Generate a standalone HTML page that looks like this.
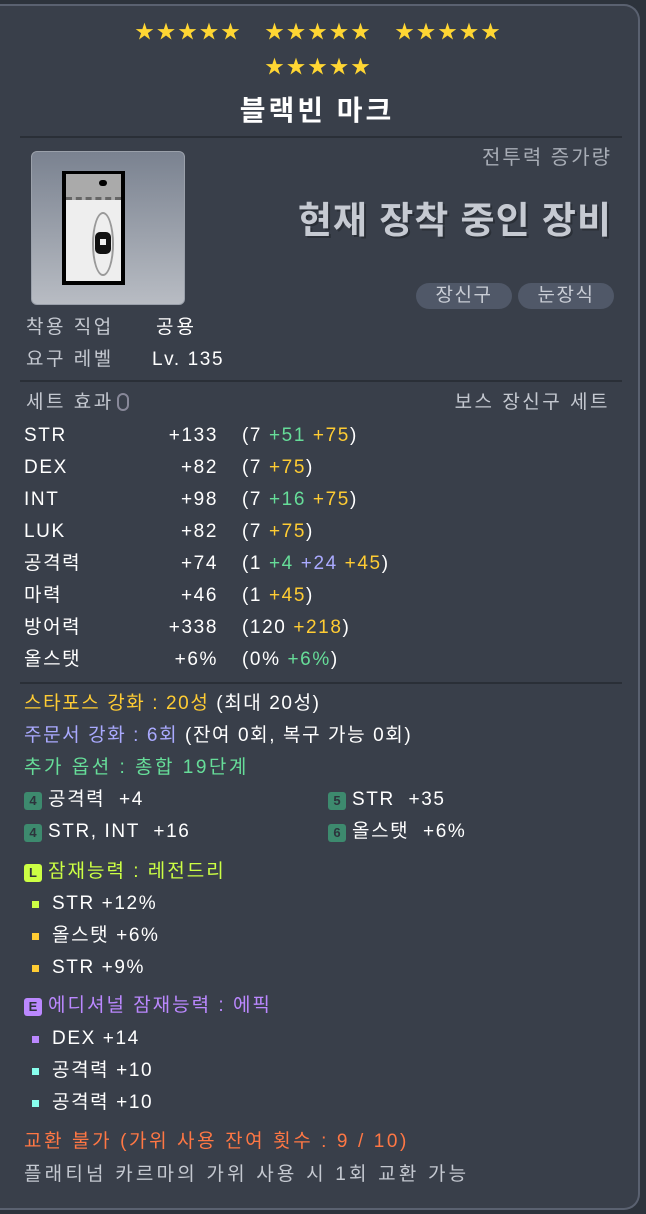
<!DOCTYPE html>
<html><head><meta charset="utf-8"><style>
*{margin:0;padding:0;box-sizing:border-box}
body{width:646px;height:1214px;background:#2d333c;overflow:hidden;position:relative;font-family:"Liberation Sans","Noto Sans CJK KR","NanumGothic",sans-serif;color:#fff;font-size:19px}
#p{position:absolute;left:0;top:4px;width:640px;height:1206px;background:#393f4a;border:2px solid #5a6170;border-radius:0 16px 16px 0;border-left:none}
.t{position:absolute;white-space:nowrap;line-height:22px;letter-spacing:1.6px}
.st{position:absolute;color:#ffd633;font-size:19px;letter-spacing:2.5px;line-height:20px}
.hr{position:absolute;height:2px;background:#2a2f37}
.g{color:#66dd99}.y{color:#ffcc33}.v{color:#aaaaff}.gr{color:#c4c8d0}
.pill{position:absolute;top:283px;height:26px;border-radius:13px;background:#505868;color:#c8ccd4;text-align:center;line-height:26px;font-size:19px;letter-spacing:1.5px}
.badge{display:inline-block;width:18px;height:18px;border-radius:3px;background:#3d8a6e;color:#2d333c;font-size:13px;font-weight:bold;text-align:center;line-height:18px;vertical-align:0;margin-right:6px;letter-spacing:0}
.dot{position:absolute;width:7px;height:7px}
.r{text-align:right;width:80px}
</style></head><body>
<div id="p"></div>
<div class="st" style="left:135px;top:23px">★★★★★</div>
<div class="st" style="left:265px;top:23px">★★★★★</div>
<div class="st" style="left:395px;top:23px">★★★★★</div>
<div class="st" style="left:265px;top:58px">★★★★★</div>
<div class="t" style="left:0;width:634px;text-align:center;top:96px;font-size:28px;font-weight:bold;line-height:30px;letter-spacing:3px">블랙빈 마크</div>
<div class="hr" style="top:136px;left:20px;width:602px"></div>
<div style="position:absolute;left:31px;top:151px;width:154px;height:154px;border-radius:6px;background:linear-gradient(#7a8290,#b8bcc3);border:1px solid #9aa0aa"></div>
<div style="position:absolute;left:62px;top:171px;width:63px;height:114px;background:#eee;border:4px solid #000;border-top-width:3px"></div>
<div style="position:absolute;left:66px;top:174px;width:55px;height:26px;background:#aaa;border-bottom:3px dashed #666"></div>
<div style="position:absolute;left:99px;top:180px;width:8px;height:6px;background:#000;border-radius:3px"></div>
<div style="position:absolute;left:92px;top:212px;width:22px;height:64px;border:2px solid #999;border-radius:50%"></div>
<div style="position:absolute;left:95px;top:232px;width:16px;height:22px;background:#111;border-radius:5px"></div>
<div style="position:absolute;left:100px;top:239px;width:6px;height:6px;background:#eee"></div>
<div class="t gr" style="right:34px;top:147px;font-size:20px;color:#a8adb6;letter-spacing:2px">전투력 증가량</div>
<div class="t" style="right:34px;top:200px;font-size:37px;font-weight:bold;line-height:42px;color:#c6cad2;text-shadow:2px 2px 0 #2a2f37;letter-spacing:1px">현재 장착 중인 장비</div>
<div class="pill" style="left:416px;width:96px">장신구</div>
<div class="pill" style="left:518px;width:96px">눈장식</div>
<div class="t gr" style="left:26px;top:317px;letter-spacing:2.5px">착용 직업</div><div class="t" style="left:156px;top:317px;letter-spacing:3px">공용</div>
<div class="t gr" style="left:26px;top:349px;letter-spacing:2.5px">요구 레벨</div><div class="t" style="left:152px;top:349px">Lv. 135</div>
<div class="hr" style="top:380px;left:20px;width:602px"></div>
<div class="t gr" style="left:26px;top:392px;letter-spacing:2.5px">세트 효과<span style="display:inline-block;width:12px;height:18px;border:2px solid #889;border-radius:6px;vertical-align:-3px;margin-left:3px"></span></div>
<div class="t gr" style="right:36px;top:392px;letter-spacing:2.5px">보스 장신구 세트</div>

<div class="t" style="left:24px;top:425px">STR</div><div class="t r" style="left:138px;top:425px">+133</div><div class="t" style="left:242px;top:425px">(7 <span class="g">+51</span> <span class="y">+75</span>)</div>
<div class="t" style="left:24px;top:457px">DEX</div><div class="t r" style="left:138px;top:457px">+82</div><div class="t" style="left:242px;top:457px">(7 <span class="y">+75</span>)</div>
<div class="t" style="left:24px;top:489px">INT</div><div class="t r" style="left:138px;top:489px">+98</div><div class="t" style="left:242px;top:489px">(7 <span class="g">+16</span> <span class="y">+75</span>)</div>
<div class="t" style="left:24px;top:521px">LUK</div><div class="t r" style="left:138px;top:521px">+82</div><div class="t" style="left:242px;top:521px">(7 <span class="y">+75</span>)</div>
<div class="t" style="left:24px;top:553px">공격력</div><div class="t r" style="left:138px;top:553px">+74</div><div class="t" style="left:242px;top:553px">(1 <span class="g">+4</span> <span class="v">+24</span> <span class="y">+45</span>)</div>
<div class="t" style="left:24px;top:585px">마력</div><div class="t r" style="left:138px;top:585px">+46</div><div class="t" style="left:242px;top:585px">(1 <span class="y">+45</span>)</div>
<div class="t" style="left:24px;top:617px">방어력</div><div class="t r" style="left:138px;top:617px">+338</div><div class="t" style="left:242px;top:617px">(120 <span class="y">+218</span>)</div>
<div class="t" style="left:24px;top:649px">올스탯</div><div class="t r" style="left:138px;top:649px">+6%</div><div class="t" style="left:242px;top:649px">(0% <span class="g">+6%</span>)</div>
<div class="hr" style="top:682px;left:20px;width:602px"></div>

<div class="t" style="left:24px;top:693px"><span class="y">스타포스 강화 : 20성</span> (최대 20성)</div>
<div class="t" style="left:24px;top:725px"><span class="v">주문서 강화 : 6회</span> (잔여 0회, 복구 가능 0회)</div>
<div class="t g" style="left:24px;top:757px;letter-spacing:2.5px">추가 옵션 : 총합 19단계</div>
<div class="t" style="left:24px;top:789px"><span class="badge">4</span>공격력 &nbsp;+4</div>
<div class="t" style="left:328px;top:789px"><span class="badge">5</span>STR &nbsp;+35</div>
<div class="t" style="left:24px;top:821px"><span class="badge">4</span>STR, INT &nbsp;+16</div>
<div class="t" style="left:328px;top:821px"><span class="badge">6</span>올스탯 &nbsp;+6%</div>

<div class="t" style="left:24px;top:861px;color:#ccff44;letter-spacing:2px"><span class="badge" style="background:#ccff44">L</span>잠재능력 : 레전드리</div>
<div class="dot" style="left:32px;top:901px;background:#ccff44"></div><div class="t" style="left:52px;top:893px">STR +12%</div>
<div class="dot" style="left:32px;top:933px;background:#ffcc33"></div><div class="t" style="left:52px;top:925px">올스탯 +6%</div>
<div class="dot" style="left:32px;top:965px;background:#ffcc33"></div><div class="t" style="left:52px;top:957px">STR +9%</div>

<div class="t" style="left:24px;top:995px;color:#bb88ff;letter-spacing:2px"><span class="badge" style="background:#bb88ff">E</span>에디셔널 잠재능력 : 에픽</div>
<div class="dot" style="left:32px;top:1036px;background:#bb88ff"></div><div class="t" style="left:52px;top:1028px">DEX +14</div>
<div class="dot" style="left:32px;top:1068px;background:#88ffee"></div><div class="t" style="left:52px;top:1060px">공격력 +10</div>
<div class="dot" style="left:32px;top:1100px;background:#88ffee"></div><div class="t" style="left:52px;top:1092px">공격력 +10</div>
<div class="t" style="left:24px;top:1131px;color:#ff7744;letter-spacing:2.6px">교환 불가 (가위 사용 잔여 횟수 : 9 / 10)</div>
<div class="t gr" style="left:24px;top:1164px;letter-spacing:3.2px">플래티넘 카르마의 가위 사용 시 1회 교환 가능</div>
</body></html>
